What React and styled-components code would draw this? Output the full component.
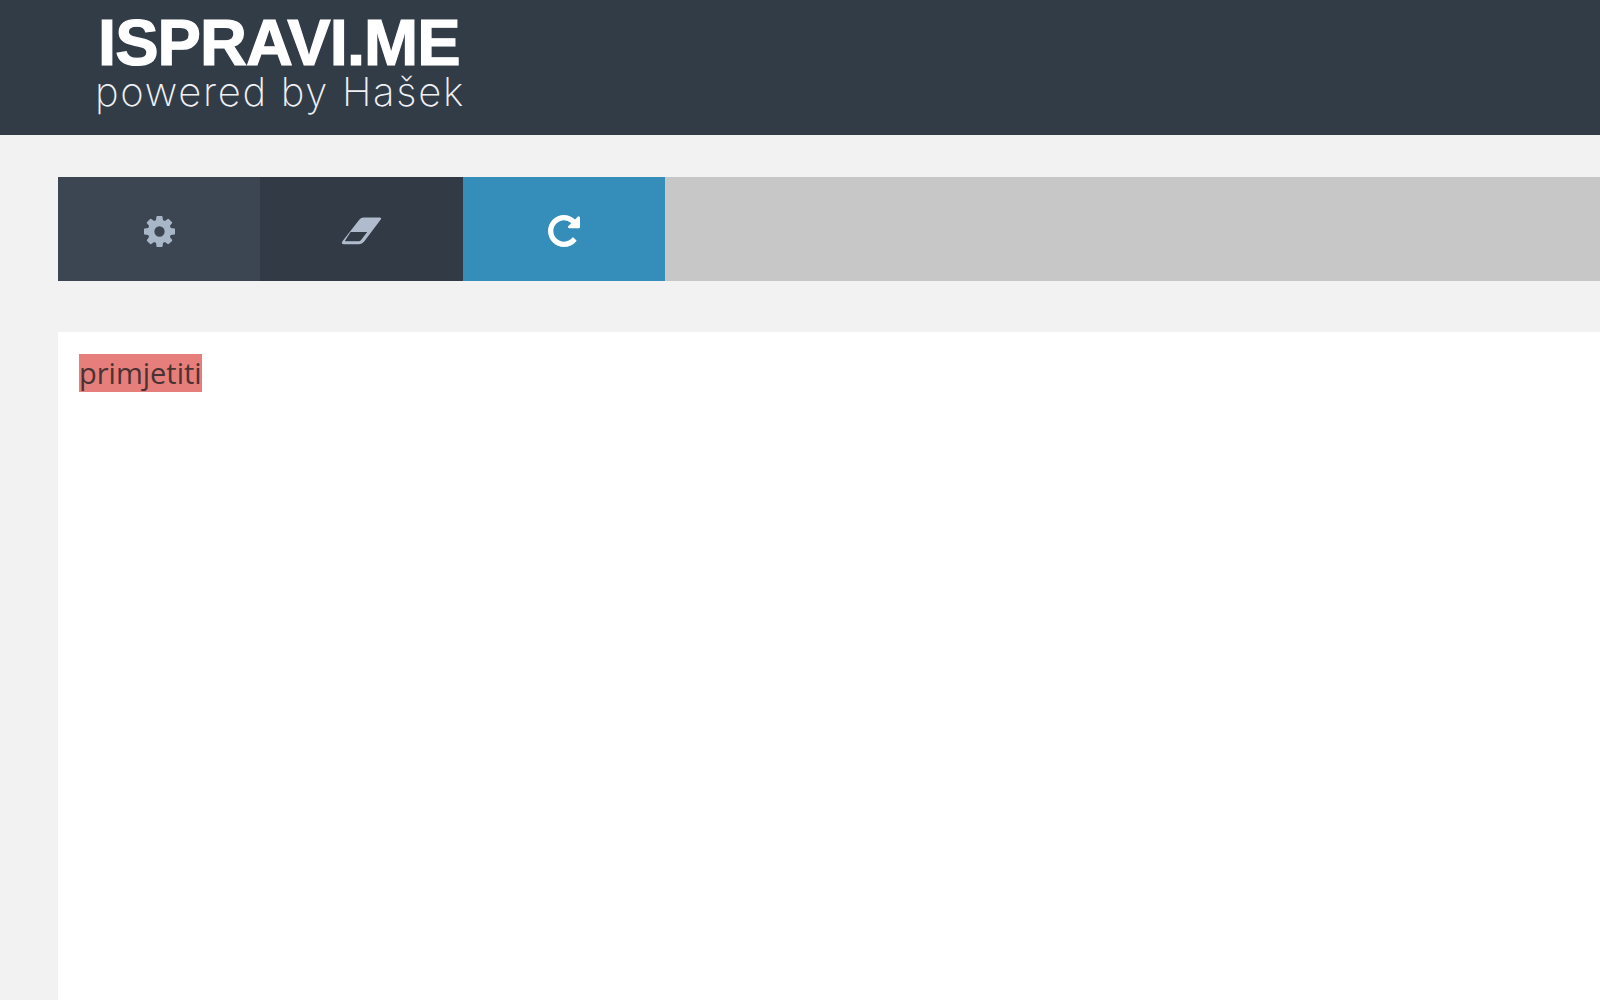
import React from "react";
import styled, { createGlobalStyle } from "styled-components";

const GlobalStyle = createGlobalStyle`
    html, body {
        margin: 0;
        height: 100%;
        overflow: hidden;
        background: #f2f2f2;
    }
    #root {
        height: 100%;
    }
`;

const Page = styled.div`
    display: flex;
    flex-direction: column;
    height: 100%;
`;

const Header = styled.header`
    height: 135px;
    flex-shrink: 0;
    background: #323c47;
    padding: 13px 0 0 95px;
    box-sizing: border-box;
`;

const LogoTitle = styled.div`
    font-family: "Liberation Sans", Arial, sans-serif;
    font-weight: 700;
    font-size: 65px;
    line-height: 60px;
    letter-spacing: -0.9px;
    color: #ffffff;
    -webkit-text-stroke: 1.2px #ffffff;
    margin-left: 3px;
`;

const LogoSub = styled.div`
    font-family: Inter, Lato, sans-serif;
    font-weight: 200;
    font-size: 40px;
    line-height: 38px;
    letter-spacing: 1.7px;
    color: #eef0f3;
`;

const Main = styled.main`
    flex: 1;
    display: flex;
    flex-direction: column;
    padding: 42px 0 0 58px;
    min-height: 0;
`;

const Toolbar = styled.div`
    display: flex;
    height: 104px;
    flex-shrink: 0;
    background: #c7c7c7;
`;

const ToolButton = styled.button`
    width: ${(p) => p.$width}px;
    border: 0;
    padding: 4px 0 0;
    display: flex;
    align-items: center;
    justify-content: center;
    background: ${(p) => p.$bg};
    color: ${(p) => p.$color};
`;

const Editor = styled.div`
    flex: 1;
    margin-top: 51px;
    background: #ffffff;
    padding: 22px 21px;
    font-family: "Open Sans", sans-serif;
    font-size: 29px;
    line-height: 38px;
    color: #3d3d3d;
`;

const Mistake = styled.span`
    display: inline-block;
    height: 38px;
    background: #e67f7b;
    color: #4a3234;
`;

const Glyph = ({ size, d }) => (
    <svg width={size} height={size} viewBox="0 -1408 1536 1536" fill="currentColor">
        <path transform="scale(1,-1)" d={d} />
    </svg>
);

const COG =
    "M1024 640q0 106 -75 181t-181 75t-181 -75t-75 -181t75 -181t181 -75t181 75t75 181zM1536 749v-222q0 -12 -8 -23t-20 -13l-185 -28q-19 -54 -39 -91q35 -50 107 -138q10 -12 10 -25t-9 -23q-27 -37 -99 -108t-94 -71q-12 0 -26 9l-138 108q-44 -23 -91 -38q-16 -136 -29 -186q-7 -28 -36 -28h-222q-14 0 -24.5 8.5t-11.5 21.5l-28 184q-49 16 -90 37l-141 -107q-10 -9 -25 -9q-14 0 -25 11q-126 114 -165 168q-7 10 -7 23q0 12 8 23q15 21 51 66.5t54 70.5q-27 50 -41 99l-183 27q-13 2 -21 12.5t-8 23.5v222q0 12 8 23t19 13l186 28q14 46 39 92q-40 57 -107 138q-10 12 -10 24q0 10 9 23q26 36 98.5 107.5t94.5 71.5q13 0 26 -10l138 -107q44 23 91 38q16 136 29 186q7 28 36 28h222q14 0 24.5 -8.5t11.5 -21.5l28 -184q49 -16 90 -37l142 107q9 9 24 9q13 0 25 -10q129 -119 165 -170q7 -8 7 -22q0 -12 -8 -23q-15 -21 -51 -66.5t-54 -70.5q26 -50 41 -98l183 -28q13 -2 21 -12.5t8 -23.5z";

const REPEAT =
    "M1536 1280v-448q0 -26 -19 -45t-45 -19h-448q-42 0 -59 40q-17 39 14 69l138 138q-148 137 -349 137q-104 0 -198.5 -40.5t-163.5 -109.5t-109.5 -163.5t-40.5 -198.5t40.5 -198.5t109.5 -163.5t163.5 -109.5t198.5 -40.5q119 0 225 52t179 147q7 10 23 12q14 0 25 -9l137 -138q9 -8 9.5 -20.5t-7.5 -22.5q-109 -132 -264 -204.5t-327 -72.5q-156 0 -298 61t-245 164t-164 245t-61 298t61 298t164 245t245 164t298 61q147 0 284.5 -55.5t244.5 -156.5l130 129q29 31 70 14q39 -17 39 -59z";

const EraserIcon = () => (
    <svg width="41" height="28" viewBox="0 0 40 27" fill="currentColor">
        <path
            fillRule="evenodd"
            d="M18 2.2Q19.6 0.4 22 0.4H37.4Q40.2 0.4 38.6 2.6L22.6 23.8Q20.6 26.4 17.6 26.4H3.2Q-0.6 26.4 1.6 23.2ZM9.4 14.4L4.2 22.6Q3.6 23.6 4.8 23.6H17.4Q18.6 23.6 19.4 22.6L25.6 14.4Z"
        />
    </svg>
);

const App = () => {
    return (
        <Page>
            <GlobalStyle />
            <Header>
                <LogoTitle>ISPRAVI.ME</LogoTitle>
                <LogoSub>powered by Hašek</LogoSub>
            </Header>
            <Main>
                <Toolbar>
                    <ToolButton $width={202} $bg="#3c4652" $color="#a9b6c8">
                        <Glyph size={31} d={COG} />
                    </ToolButton>
                    <ToolButton $width={203} $bg="#313a45" $color="#b0bccd">
                        <EraserIcon />
                    </ToolButton>
                    <ToolButton $width={202} $bg="#348eb9" $color="#ffffff">
                        <Glyph size={32} d={REPEAT} />
                    </ToolButton>
                </Toolbar>
                <Editor>
                    <Mistake>primjetiti</Mistake>
                </Editor>
            </Main>
        </Page>
    );
};

export default App;
